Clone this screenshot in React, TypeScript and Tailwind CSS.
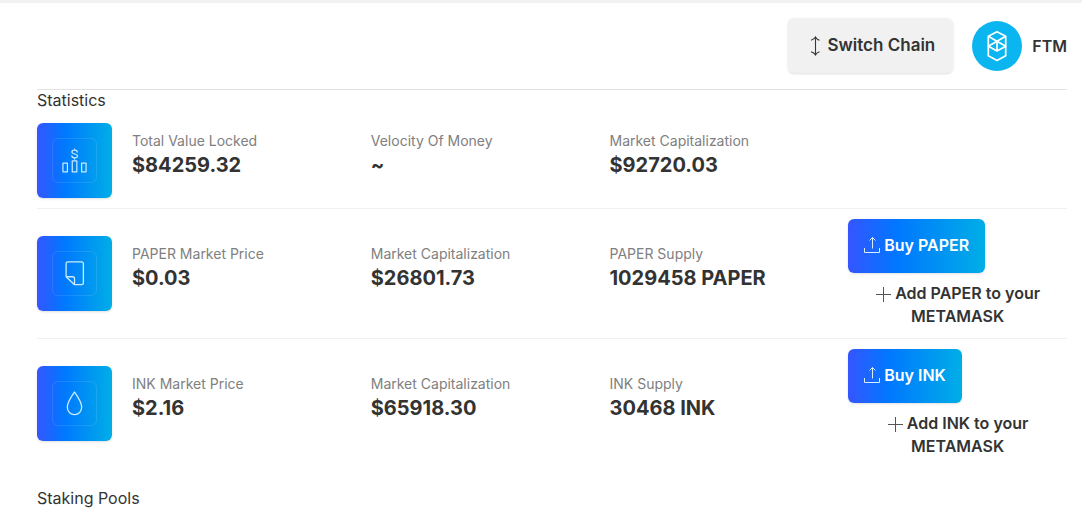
import type { ReactNode } from "react";

const GRADIENT = "bg-[linear-gradient(to_right,#3555ff_0%,#0078ff_36%,#00aee6_100%)]";

function StatsIcon() {
  return (
    <svg viewBox="0 0 46 46" className="size-full" fill="none" stroke="#c9ecff" strokeWidth="1.300" strokeLinejoin="round" strokeLinecap="round">
      <path d="M26 14c-.2-1.300-1.300-2-2.900-2s-2.900.8-2.900 2c0 2.900 6 1.200 6 4.200 0 1.200-1.300 2-3.100 2-1.700 0-2.900-.8-3-2.100M23.100 10.700v1.300M23.100 20.200v1.300" />
      <path d="M10.600 25.900h4.800v9.300h-4.800zM20.600 23.500h4.900v11.700h-4.900zM30.600 25.900h4.800v9.300h-4.800z" />
    </svg>
  );
}

function PaperIcon() {
  return (
    <svg viewBox="0 0 46 46" className="size-full" fill="none" stroke="#c9ecff" strokeWidth="1.400" strokeLinejoin="round">
      <path d="M16 10.500h14.500a2 2 0 0 1 2 2v20.500a2 2 0 0 1-2 2h-7.500l-9-8.500v-14a2 2 0 0 1 2-2z" />
      <path d="M14 26.500h7a2 2 0 0 1 2 2v6" />
    </svg>
  );
}

function InkIcon() {
  return (
    <svg viewBox="0 0 46 46" className="size-full" fill="none" stroke="#c9ecff" strokeWidth="1.400" strokeLinejoin="round">
      <path d="M23 10.700c-3.200 4.600-7.700 10.800-7.700 16 0 4.900 3.400 8.300 7.700 8.300s7.700-3.400 7.700-8.300c0-5.200-4.500-11.400-7.700-16z" />
    </svg>
  );
}

function UploadIcon() {
  return (
    <svg viewBox="0 0 16 16" className="size-4 shrink-0" fill="none" stroke="#d6efff" strokeWidth="1" aria-hidden="true">
      <path d="M.5 11v4.500h15v-4.500M8.500 11.500v-11M5.500 3.500l3-3 3 3" />
    </svg>
  );
}

function UpDownIcon() {
  return (
    <svg viewBox="0 0 10 20" className="h-5 w-2.5" fill="none" stroke="#3a3a3a" strokeWidth="1.100" aria-hidden="true">
      <path d="M5.500 1v18M1 4.300c1.500-.4 3.600-1.600 4.500-3.300 .9 1.700 2.500 2.900 4 3.300M1 15.700c1.500.4 3.600 1.600 4.500 3.300 .9-1.700 2.500-2.900 4-3.300" />
    </svg>
  );
}

function FantomLogo() {
  return (
    <svg viewBox="0 0 50 50" className="size-[50px]" aria-hidden="true">
      <circle cx="25" cy="25" r="25" fill="#0bb5ef" />
      <g fill="none" stroke="#fff" strokeWidth="1.700" strokeLinejoin="round">
        <path d="M25 10.700l8.700 4.600v19.400L25 39.400l-8.700-4.700V15.300z" />
        <path d="M16.300 15.300L33.700 25.200L25 30l-8.700-4.800L33.700 15.300M25 20v10" />
      </g>
    </svg>
  );
}

type Row = {
  icon: ReactNode;
  stats: { label: string; value: string }[];
  token?: string;
};

const ROWS: Row[] = [
  {
    icon: <StatsIcon />,
    stats: [
      { label: "Total Value Locked", value: "$84259.32" },
      { label: "Velocity Of Money", value: "~" },
      { label: "Market Capitalization", value: "$92720.03" },
    ],
  },
  {
    icon: <PaperIcon />,
    token: "PAPER",
    stats: [
      { label: "PAPER Market Price", value: "$0.03" },
      { label: "Market Capitalization", value: "$26801.73" },
      { label: "PAPER Supply", value: "1029458 PAPER" },
    ],
  },
  {
    icon: <InkIcon />,
    token: "INK",
    stats: [
      { label: "INK Market Price", value: "$2.16" },
      { label: "Market Capitalization", value: "$65918.30" },
      { label: "INK Supply", value: "30468 INK" },
    ],
  },
];

function TokenActions({ token }: { token: string }) {
  return (
    <div className="flex flex-col items-start gap-[9px]">
      <button type="button" className={`flex h-[54px] items-center gap-1 rounded-md px-4 pb-0.5 font-semibold text-white shadow ${GRADIENT}`}>
        <UploadIcon />
        {`Buy ${token}`}
      </button>
      <button type="button" className="w-full text-center leading-[23px] font-semibold">
        <span className="flex items-center justify-center gap-1">
          <svg viewBox="0 0 16 16" className="size-4 shrink-0" stroke="#555" strokeWidth="1" aria-hidden="true">
            <path d="M8.500 1v15M1 8.500h15" />
          </svg>
          {`Add ${token} to your`}
        </span>
        <span className="block">METAMASK</span>
      </button>
    </div>
  );
}

export default function App() {
  return (
    <div className="border-t-[3px] border-[#f1f1f1] bg-white pr-[15px] pl-[37px] font-[Inter,sans-serif] text-base text-[#333]">
      <header className="flex h-[87px] items-center justify-end gap-[19px] border-b border-[#e2e2e2] pb-px">
        <button type="button" className="flex h-[55px] items-center gap-2 rounded-md bg-[#f1f1f1] pr-[18px] pl-[22px] text-[17px] font-semibold shadow">
          <UpDownIcon />
          Switch Chain
        </button>
        <div className="flex items-center gap-2.5 font-semibold">
          <FantomLogo />
          FTM
        </div>
      </header>

      <main>
        <h2 className="pb-0.5 text-base leading-[21px]">Statistics</h2>
        {ROWS.map((row, i) => (
          <section key={i} className="flex items-center gap-5 border-b border-[#f0f0f0] py-2.5 last-of-type:border-b-0">
            <div className={`size-[75px] shrink-0 rounded-md p-[15px] shadow ${GRADIENT}`}>
              <div className="size-full rounded-md border border-white/10">{row.icon}</div>
            </div>
            <div className="grid flex-1 grid-cols-4 items-center gap-5">
              {row.stats.map((stat) => (
                <dl key={stat.label} className="pb-[11px] whitespace-nowrap">
                  <dt className="text-sm leading-5 text-[#808080]">{stat.label}</dt>
                  <dd className="text-xl leading-7 font-bold">{stat.value}</dd>
                </dl>
              ))}
              {row.token && <TokenActions token={row.token} />}
            </div>
          </section>
        ))}
        <h2 className="mt-5 pb-0.5 text-base leading-[21px]">Staking Pools</h2>
      </main>
    </div>
  );
}
